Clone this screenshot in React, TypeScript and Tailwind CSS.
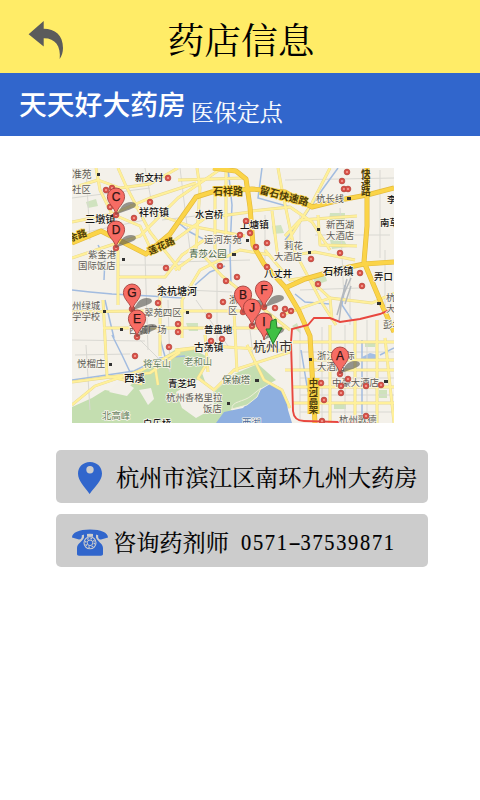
import React from "react";

const SERIF =
  "font-['Noto_Serif_CJK_SC','Noto_Sans_CJK_SC',serif]";
const SANS = "font-['Noto_Sans_CJK_SC',sans-serif]";

const minorRoads = [
  "M72 188 L98 180 L120 188 L150 184 L178 168",
  "M96 168 L100 190 L112 214 L150 198 L196 183",
  "M72 222 L112 214 L140 226 L152 252",
  "M118 168 L126 186 L150 232 L180 270",
  "M72 258 L108 246 L140 236 L178 198 L222 168",
  "M118 250 L118 305 M118 277 L165 277 L182 255 L210 236",
  "M130 205 L190 226 L245 236",
  "M178 180 L245 178 M215 190 L215 250 M226 168 L226 240",
  "M252 211 L290 207 L312 222 L330 250",
  "M175 240 L205 218 L250 212",
  "M175 270 L200 252 L222 276 L262 308 L290 330",
  "M182 300 L182 338 M182 300 L200 270 L240 250 L270 255",
  "M136 311 L250 311 M103 328 L285 328 M160 285 L160 356",
  "M72 312 L135 311 M103 300 L107 376 L142 384",
  "M175 350 L210 346 L290 351 M205 335 L208 372 M234 310 L237 372",
  "M72 405 L95 386 L142 370 L178 351 L210 346",
  "M72 382 L118 376 L150 373 L180 352",
  "M210 358 L198 378 L214 390 L234 370 L290 352",
  "M247 345 L264 380 L282 390 L290 408",
  "M278 168 L282 190 L295 252 L322 303 L336 325",
  "M285 256 L315 252 L355 260 M308 278 L330 298 L332 320",
  "M318 215 L320 245 L357 246 M285 236 L300 220 L357 216",
  "M330 168 L312 203 L285 245",
  "M285 314 L330 298 L372 303 L394 293",
  "M293 342 L394 342 M293 387 L394 387 M330 325 L330 423",
  "M355 320 L355 423 M377 320 L377 423 M293 403 L394 403",
  "M312 360 L394 360 M385 338 L394 423 M285 370 L394 370",
  "M197 168 L200 188 L196 250 M154 360 L158 385",
  "M265 250 L290 280 L340 272 M272 211 L278 258",
];

const faintStreets = [
  "M72 198 L150 188 M86 168 L90 240 M145 168 L155 220 M72 235 L145 220",
  "M180 168 L190 250 M175 262 L250 260 M162 220 L220 213",
  "M86 265 L180 265 M145 255 L148 350 M72 340 L145 341 M168 300 L170 372",
  "M186 290 L232 292 M217 255 L217 345 M196 300 L228 346 M285 180 L394 178",
  "M265 215 L265 260 M300 214 L300 260 M340 208 L344 302 M380 170 L380 258",
  "M315 235 L390 235 M300 290 L360 288 M350 272 L350 325 M385 250 L385 310",
  "M300 327 L300 420 M322 327 L322 420 M345 325 L345 420 M367 320 L367 420",
  "M300 352 L394 352 M300 378 L394 378 M300 395 L394 395 M300 412 L394 412",
  "M75 355 L130 354 M86 345 L90 410 M132 332 L170 370 M250 330 L254 365",
];

const streams = [
  "M72 290 L90 292 L112 294 L150 296 L182 298",
  "M98 245 L105 258 L104 280 M105 300 L114 338",
  "M228 168 L232 205 L230 250 L231 285",
  "M262 168 L258 198 L290 207",
  "M175 220 L190 232 L205 240",
  "M338 168 L322 190 L302 220 L285 240",
  "M72 380 L100 376 L134 371 L160 358 L185 356",
  "M112 335 L122 355 L130 372 M160 339 L166 360",
  "M295 294 L305 302 L330 304 M345 285 L342 305 L352 320",
  "M362 340 L362 420 M301 350 L308 392 M380 355 L394 348",
  "M195 285 L210 272 L225 266",
];

const mainRoads = [
  "M72 243 L101 231 L146 254 L170 234 L196 197 L212 192 L252 189 L285 192 L312 207 L340 200 L367 195 L394 188",
  "M213 168 L236 171 L246 179 L250 207 L253 245 L264 264 L285 287 L299 311 L310 336 L315 423",
  "M367 168 L367 226 L364 262 L374 286 L382 305 L394 332",
  "M285 288 L305 279 L340 269 L364 264 L394 262",
];

const markers: [number, number][] = [
  [106, 190], [112, 188], [110, 207], [116, 215], [116, 248], [134, 218], [150, 202],
  [168, 178], [166, 268], [158, 303], [132, 309], [137, 337], [135, 356], [169, 347],
  [178, 324], [178, 332], [220, 266], [237, 277], [226, 281], [223, 302],
  [209, 316], [243, 312], [252, 326], [264, 307], [267, 332], [275, 308], [283, 315],
  [291, 311], [246, 221], [240, 235], [250, 233], [256, 247], [267, 243], [267, 267],
  [347, 172], [342, 181], [344, 189], [348, 189], [340, 253], [311, 259],
  [318, 284], [360, 273], [362, 286], [285, 309], [211, 341], [222, 339], [340, 374],
  [341, 386], [341, 393], [348, 379], [321, 383], [324, 400], [366, 386], [381, 385],
  [366, 416], [322, 421],
];

type MapLabel = { t: string; x: number; y: number; s?: number; c?: string; r?: number };
const strong = "#161616";
const soft = "#5d5b56";
const road = "#4b3b0b";
const labels: MapLabel[] = [
  { t: "准苑", x: 72, y: 178, s: 9.8 },
  { t: "社区", x: 72, y: 193 },
  { t: "新文村", x: 135, y: 181, c: strong },
  { t: "三墩镇", x: 85, y: 223, s: 10.2, c: strong },
  { t: "祥符镇", x: 139, y: 216, s: 10, c: strong },
  { t: "水宫桥", x: 195, y: 218, c: strong },
  { t: "石祥路", x: 213, y: 194.5, s: 10, c: road },
  { t: "留石快速路", x: 259, y: 193, s: 10, c: road, r: 15 },
  { t: "上塘镇", x: 240, y: 228, s: 9.6, c: strong },
  { t: "运河东苑", x: 204, y: 243 },
  { t: "青莎公园", x: 189, y: 257, c: "#42623d" },
  { t: "杭长线", x: 316, y: 202 },
  { t: "新西湖", x: 326, y: 228 },
  { t: "大酒店", x: 326, y: 239 },
  { t: "南草", x: 380, y: 226, c: strong },
  { t: "李", x: 387, y: 203, c: strong },
  { t: "紫金港", x: 88, y: 258 },
  { t: "国际饭店", x: 78, y: 268.5 },
  { t: "余路", x: 70, y: 242, c: road, r: -20 },
  { t: "莲花路", x: 150, y: 255, c: road, r: -25 },
  { t: "莉花", x: 284, y: 249 },
  { t: "大酒店", x: 274, y: 259.5 },
  { t: "八丈井", x: 264, y: 277, c: strong },
  { t: "石桥镇", x: 323, y: 275, s: 10.2, c: strong },
  { t: "弄口", x: 374, y: 280, c: strong },
  { t: "杭", x: 386, y: 301 },
  { t: "大", x: 386, y: 312 },
  { t: "彭埠", x: 383, y: 328 },
  { t: "余杭塘河", x: 157, y: 295, s: 10, c: strong },
  { t: "州绿城", x: 72, y: 309 },
  { t: "学学校", x: 72, y: 319.5 },
  { t: "翠苑四区", x: 144, y: 316 },
  { t: "西城广场", x: 129, y: 333 },
  { t: "浙江", x: 229, y: 303 },
  { t: "区", x: 228, y: 314 },
  { t: "普盘地", x: 204, y: 333, c: strong },
  { t: "古荡镇", x: 194, y: 351, s: 9.8, c: strong },
  { t: "悦榴庄", x: 77, y: 367 },
  { t: "将军山", x: 143, y: 367, c: "#678260" },
  { t: "老和山", x: 184, y: 365, c: "#678260" },
  { t: "西溪", x: 124, y: 382, s: 10.5, c: strong },
  { t: "青芝坞", x: 168, y: 387, c: strong },
  { t: "保俶塔", x: 222, y: 383, c: "#576a51" },
  { t: "杭州香格里拉", x: 166, y: 401 },
  { t: "饭店", x: 203, y: 411.5 },
  { t: "北高峰", x: 102, y: 419, c: "#678260" },
  { t: "白乐桥", x: 143, y: 427, c: strong },
  { t: "西湖", x: 242, y: 426, c: "#46699b" },
  { t: "杭州市", x: 253, y: 350.5, s: 13, c: "#35302c" },
  { t: "浙江国际", x: 317, y: 359 },
  { t: "大酒店", x: 317, y: 369.5 },
  { t: "中豪大酒店", x: 332, y: 386 },
  { t: "杭州歌德", x: 339, y: 423 },
];

const pins = [
  { l: "C", x: 116, y: 215 }, { l: "D", x: 116, y: 248 },
  { l: "G", x: 132, y: 311 }, { l: "E", x: 137, y: 337 },
  { l: "F", x: 264, y: 308 }, { l: "B", x: 243, y: 313 },
  { l: "J", x: 252, y: 326 }, { l: "I", x: 264, y: 340 },
  { l: "A", x: 340, y: 374 },
];

function CityMap() {
  return (
    <svg
      viewBox="72 168 322 255"
      className="block h-[255px] w-[322px] overflow-hidden"
      role="img"
      aria-label="地图"
    >
      <rect x="72" y="168" width="322" height="255" fill="#f4f1ea" />
      <g fill="#c4deb0">
        <path d="M72 407 L92 398 L105 390 L122 393 L136 380 L143 370 L165 356 L178 348 L194 350 L210 358 L202 373 L210 395 L240 416 L246 423 L72 423Z" />
        <path d="M175 365 L188 354 L208 360 L196 382 L213 393 L234 374 L258 364 L276 380 L260 389 L251 402 L226 411 L216 423 L175 423Z" />
        <path d="M330 213 h15 v7 h-16Z M330 240 l12 -3 l6 10 l-16 2Z M313 278 l12 -4 l2 7 l-11 4Z M186 323 h12 v8 h-9Z M292 326 l5 -3 l4 11Z M86 202 l10 -3 l2 7 l-10 2Z M272 226 l9 -1 l3 8 l-11 1Z" opacity=".75" />
        <path d="M334 402 h12 v7 h-12Z M365 342 h10 v5 h-10Z M379 390 h8 v8 h-8Z" opacity=".8" />
      </g>
      <path d="M109 392 L121 379 L134 388 L127 396Z M139 390 L151 388 L154 399 L148 405Z M176 392 L200 378 L213 392 L214 408 L196 418 L182 408Z" fill="#f3f0e9" />
      <path d="M216 423 L224 412 L243 408 L257 392 L270 384 L279 387 L286 397 L288 410 L292 423Z" fill="#8eafe0" />
      <path d="M232 409 C231 401 244 402 251 396 L261 388 L257 397 L247 405 Z" fill="#c4deb0" stroke="#eeeed8" />
      <path d="M362 357 l8 -4 l8 2 l-3 5 l-10 1Z" fill="#a4bfe4" />
      <g fill="none" stroke="#d9d8d2" strokeWidth="1">
        {faintStreets.map((d, i) => <path key={i} d={d} />)}
      </g>
      <g fill="none" stroke="#a2bce0" strokeWidth="1.5">
        {streams.map((d, i) => <path key={i} d={d} />)}
      </g>
      <g fill="none" stroke="#e7d78d" strokeWidth="2.9" strokeLinejoin="round">
        {minorRoads.map((d, i) => <path key={i} d={d} />)}
      </g>
      <g fill="none" stroke="#fff09a" strokeWidth="2.2" strokeLinejoin="round">
        {minorRoads.map((d, i) => <path key={i} d={d} />)}
      </g>
      <g fill="none" stroke="#e2b93c" strokeWidth="5" strokeLinejoin="round">
        {mainRoads.map((d, i) => <path key={i} d={d} />)}
      </g>
      <g fill="none" stroke="#fbd448" strokeWidth="3.8" strokeLinejoin="round">
        {mainRoads.map((d, i) => <path key={i} d={d} />)}
      </g>
      <rect x="307.5" y="378" width="12" height="36" fill="#fbd448" />
      <g fill="none" stroke="#b5b9bd" strokeWidth="1.5">
        <path d="M351 278 L342 298 L339 321 M347 279 L343 294 L337 315 M351 286 L345 304" />
      </g>
      <path d="M394 308 L380 314 L360 319 L340 322 L330 318 L314 318 L308 325 L292 329 L291 342 L293 411 Q294 421 304 421 L370 423" fill="none" stroke="#e8473f" strokeWidth="1.9" />
      <path
        fill="#333"
        d="M97 173h3v3h-3Z M122 258h3v3h-3Z M103 310h3v3h-3Z M120 328h3v3h-3Z M109 363h3v3h-3Z M232 253h4v3h-4Z M186 311h3v3h-3Z M255 379h4v3h-4Z M227 402h3v3h-3Z M317 228h3v3h-3Z M347 197h4v3h-4Z M308 251h3v3h-3Z M377 302h4v3h-4Z M309 358h3v3h-3Z M384 380h4v3h-4Z M246 239h3v3h-3Z"
      />
      <g
        className="font-['Noto_Sans_CJK_SC',sans-serif]"
        strokeWidth="1.6"
        paintOrder="stroke"
        strokeLinejoin="round"
      >
        {labels.map(({ t, x, y, s = 9.4, c = soft, r }, i) => (
          <text
            key={i}
            x={x}
            y={y}
            fontSize={s}
            fill={c}
            fontWeight={c === road ? 700 : c === strong ? 500 : 400}
            stroke={c === road ? "#fbd448" : "#f8f5ec"}
            transform={r ? `rotate(${r} ${x} ${y})` : undefined}
          >
            {t}
          </text>
        ))}
        {["快", "速", "路"].map((t, i) => (
          <text key={t} x="361" y={176.5 + i * 9.2} fontSize="9.6" fill={road} stroke="none" fontWeight="700">{t}</text>
        ))}
        {["中", "河", "高", "架"].map((t, i) => (
          <text key={t} x="308.8" y={386 + i * 8.9} fontSize="9.4" fill={road} stroke="none" fontWeight="700">{t}</text>
        ))}
      </g>
      {markers.map(([x, y], i) => (
        <g key={i}>
          <circle cx={x} cy={y} r="2.9" fill="#db5148" stroke="#a94239" strokeWidth=".6" />
          <circle cx={x} cy={y} r="1" fill="#f6a79c" />
        </g>
      ))}
      <g fill="#55544f" opacity=".6">
        {pins.map(({ l, x, y }) => (
          <path key={l} d={`M${x} ${y} L${x + 6} ${y - 9} C${x + 10} ${y - 14} ${x + 20} ${y - 14} ${x + 20} ${y - 10} C${x + 20} ${y - 6} ${x + 9} ${y - 5} ${x} ${y}Z`} />
        ))}
      </g>
      {pins.map(({ l, x, y }) => (
        <g key={l}>
          <path
            d={`M${x} ${y} C${x - 1} ${y - 8} ${x - 8.6} ${y - 11} ${x - 8.6} ${y - 18.4} A8.6 8.6 0 0 1 ${x + 8.6} ${y - 18.4} C${x + 8.6} ${y - 11} ${x + 1} ${y - 8} ${x} ${y}Z`}
            fill="#f76c64"
            stroke="#a3413c"
            strokeWidth=".9"
          />
          <text x={x} y={y - 14} textAnchor="middle" fontSize="12" className="font-['Liberation_Sans',sans-serif]" fill="#301413" stroke="#301413" strokeWidth=".25">
            {l}
          </text>
        </g>
      ))}
      <path d="M271 321 L276 319 L277 328 L282 328 L273 344 L266 329 L270 329Z" fill="#3fc044" stroke="#287b2b" />
    </svg>
  );
}

export default function App() {
  return (
    <main className="flex h-[800px] w-[480px] flex-col overflow-hidden bg-white">
      <header className="relative flex h-[73px] items-center justify-center bg-[#ffec67] pt-1">
        <button aria-label="返回" className="absolute left-[28px] top-[20px]">
          <svg width="36" height="40" viewBox="0 0 36 40" className="block">
            <path d="M0.6 14.2 L15.7 1 V8.7 C27 8.9 35 15 35 28 C35 32 33.8 36 31.7 39 C33.2 26 27 18 15.7 18.2 V26.5 Z" fill="#5b5b5b" />
          </svg>
        </button>
        <h1 className={`${SERIF} ml-0.5 whitespace-nowrap text-[36.7px] leading-none text-black`}>药店信息</h1>
      </header>

      <section className="flex h-[63px] shrink-0 items-start gap-[5px] bg-[#3166cc] pl-[19px] text-white">
        <h2 className={`${SANS} mt-[16px] whitespace-nowrap text-[27.8px] font-medium leading-[28px]`}>天天好大药房</h2>
        <span className={`${SERIF} mt-[27px] whitespace-nowrap text-[23px] leading-[24px] [-webkit-text-stroke:0.15px_white]`}>医保定点</span>
      </section>

      <div className="mt-8 ml-[72px]">
        <CityMap />
      </div>

      <section className="ml-14 mt-[27px] flex w-[372px] flex-col gap-[11px] text-black">
        <div className="flex h-[53px] items-center rounded-[5px] bg-[#cccccc] pl-[22px]">
          <svg width="24" height="32" viewBox="0 0 24 32" className="mt-0.5 shrink-0">
            <path fillRule="evenodd" d="M12 0 C5 0 0 5 0 11.5 C0 19 6.5 24.5 11.6 32 C16.8 24.5 24 19 24 11.5 C24 5 19 0 12 0Z M12 4 A3.7 3.7 0 1 1 12 11.4 A3.7 3.7 0 0 1 12 4Z" fill="#3166cc" />
          </svg>
          <p className={`${SERIF} ml-[14px] whitespace-nowrap text-[23.2px] leading-none [-webkit-text-stroke:0.15px_black]`}>杭州市滨江区南环九州大药房</p>
        </div>
        <div className="flex h-[53px] items-center rounded-[5px] bg-[#cccccc] pl-4">
          <svg width="36" height="27" viewBox="0 0 36 27" className="mt-1 shrink-0">
            <g fill="#3166cc">
              <path d="M0 8.5 C0 3.5 7 .5 18 .5 S36 3.5 36 8.5 L29 10.5 C26.3 10.3 26 8.7 26.2 6.2 C21 4.4 15 4.4 9.8 6.2 C10 8.7 9.3 10.3 7 10.5Z" />
              <path d="M12 5 H15 V7.7 H21 V5 H24 V8.4 C25.5 12.5 31 14.5 31 19 V25 C31 26 30.2 26.7 29 26.7 H7 C5.8 26.7 5 26 5 25 V19 C5 14.5 10.5 12.5 12 8.4Z" />
            </g>
            <circle cx="18" cy="13.8" r="6" fill="none" stroke="#ccc" strokeWidth="1.1" />
            <circle cx="18" cy="13.8" r="4.4" fill="none" stroke="#ccc" strokeWidth="1.4" strokeDasharray="1.6 1.85" />
            <circle cx="18" cy="13.8" r="2.8" fill="none" stroke="#ccc" strokeWidth="1" />
          </svg>
          <p className={`${SERIF} ml-[5px] mt-0.5 whitespace-nowrap text-[23.2px] leading-none [-webkit-text-stroke:0.15px_black]`}>咨询药剂师</p>
          <p className="ml-[12px] mt-0.5 flex origin-left scale-x-[0.85] whitespace-nowrap font-['Liberation_Serif',serif] text-[24px] leading-none tracking-[2px] [-webkit-text-stroke:0.2px_black]">
            <span>0571</span>
            <span className="w-[14px] scale-x-[1.8] text-center tracking-normal">-</span>
            <span>37539871</span>
          </p>
        </div>
      </section>
    </main>
  );
}
